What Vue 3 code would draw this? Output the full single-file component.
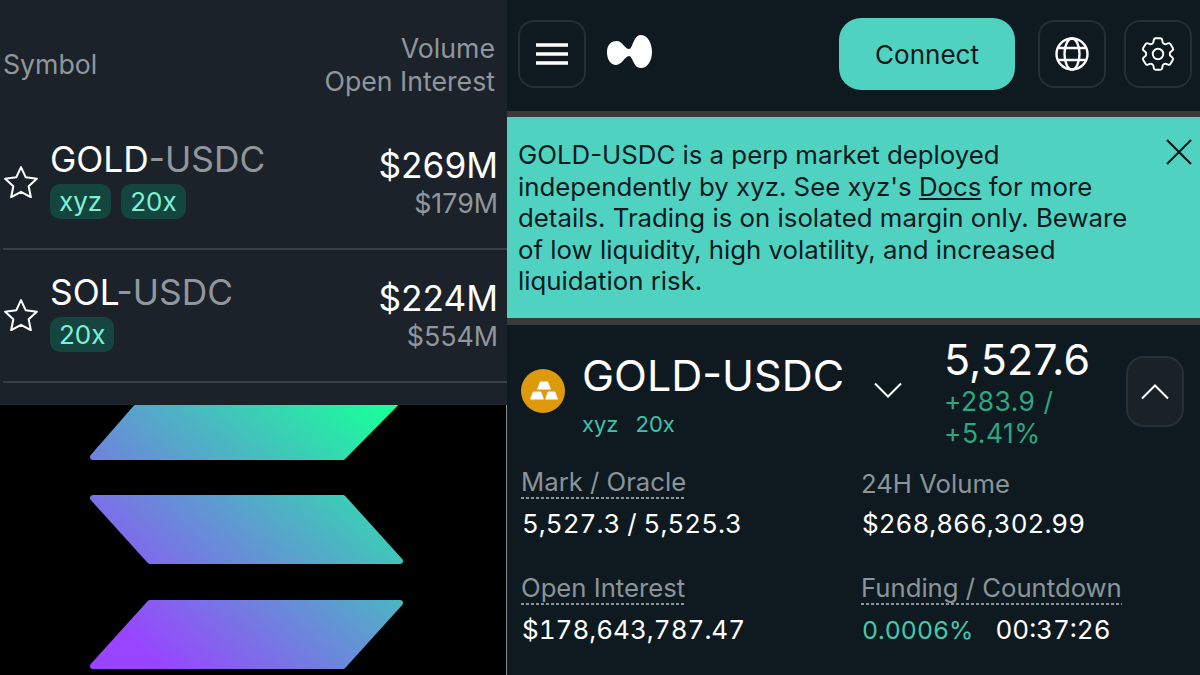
<script setup>
const rows = [
  { base: 'GOLD', tags: ['xyz', '20x'], vol: '$269M', oi: '$179M' },
  { base: 'SOL', tags: ['20x'], vol: '$224M', oi: '$554M' }
]
const stats = [
  { label: 'Mark / Oracle', dashed: true, value: '5,527.3 / 5,525.3' },
  { label: '24H Volume', dashed: false, value: '$268,866,302.99' },
  { label: 'Open Interest', dashed: true, value: '$178,643,787.47' },
  { label: 'Funding / Countdown', dashed: true, funding: '0.0006%', value: '00:37:26' }
]
</script>

<template>
  <div class="page">
    <section class="left">
      <div class="markets">
        <div class="thead">
          <span>Symbol</span>
          <span class="thead-right">Volume<br />Open Interest</span>
        </div>
        <div v-for="r in rows" :key="r.base" class="row">
          <svg class="star" viewBox="2 1.500 30 28.300" width="34" height="32">
            <path d="M17 2.500l4.200 9 9.800 1.200-7.200 6.700 1.900 9.700-8.700-4.800-8.700 4.800 1.900-9.700-7.200-6.700 9.800-1.200z" fill="none" stroke="#fff" stroke-width="1.800" stroke-linejoin="round" />
          </svg>
          <div class="sym">
            <div class="name">{{ r.base }}<span class="muted">-USDC</span></div>
            <div class="tags"><span v-for="t in r.tags" :key="t" class="tag">{{ t }}</span></div>
          </div>
          <div class="nums">
            <div class="vol">{{ r.vol }}</div>
            <div class="oi">{{ r.oi }}</div>
          </div>
        </div>
      </div>
      <div class="solana">
        <svg viewBox="0 0 506 270" width="506" height="270">
          <defs>
            <linearGradient id="sol" gradientUnits="userSpaceOnUse" x1="390" y1="5" x2="165" y2="265">
              <stop offset="0" stop-color="#19FF9B" />
              <stop offset="1" stop-color="#9945FF" />
            </linearGradient>
          </defs>
          <g fill="url(#sol)" stroke="url(#sol)" stroke-width="6" stroke-linejoin="round">
            <path d="M148 -11H405L343 52H93Z" />
            <path d="M93 93H343L400 156H150Z" />
            <path d="M150 198H400L343 261H93Z" />
          </g>
        </svg>
      </div>
    </section>

    <section class="right">
      <header class="topbar">
        <button class="icon-btn">
          <svg viewBox="0 0 34 24" width="34" height="24"><path d="M1 3h32M1 12h32M1 21h32" stroke="#fff" stroke-width="3.400" /></svg>
        </button>
        <svg class="logo" viewBox="0 0 45 33" width="45" height="33">
          <path d="M0 17C0 9 5 6 10 6C15 6 18 14 22 14C26 14 26 0 34 0C41 0 45 9 45 17C45 25 41 33 34 33C26 33 26 21 22 21C18 21 15 30 9 30C4 30 0 25 0 17Z" fill="#fff" />
        </svg>
        <button class="connect">Connect</button>
        <button class="icon-btn">
          <svg viewBox="0 0 34 34" width="34" height="34" fill="none" stroke="#fff" stroke-width="2.400">
            <circle cx="17" cy="17" r="15.500" />
            <ellipse cx="17" cy="17" rx="7.500" ry="15.500" />
            <path d="M3.500 11h27M3.500 23h27" />
          </svg>
        </button>
        <button class="icon-btn">
          <svg viewBox="0 0 24 24" width="42" height="42" fill="none" stroke="#fff" stroke-width="1.100" stroke-linejoin="round">
            <path d="M9.594 3.940c.09-.542.56-.94 1.110-.94h2.593c.55 0 1.020.398 1.110.94l.213 1.281c.063.374.313.686.645.87.074.04.147.083.22.127.325.196.72.257 1.075.124l1.217-.456a1.125 1.125 0 0 1 1.370.49l1.296 2.247a1.125 1.125 0 0 1-.26 1.431l-1.003.827c-.293.241-.438.613-.43.992a7.723 7.723 0 0 1 0 .255c-.008.378.137.75.43.991l1.004.827c.424.35.534.955.26 1.430l-1.298 2.247a1.125 1.125 0 0 1-1.369.491l-1.217-.456c-.355-.133-.75-.072-1.076.124a6.470 6.470 0 0 1-.22.128c-.331.183-.581.495-.644.869l-.213 1.281c-.09.543-.56.94-1.110.94h-2.594c-.55 0-1.019-.398-1.110-.94l-.213-1.281c-.062-.374-.312-.686-.644-.87a6.520 6.520 0 0 1-.22-.127c-.325-.196-.72-.257-1.076-.124l-1.217.456a1.125 1.125 0 0 1-1.369-.49l-1.297-2.247a1.125 1.125 0 0 1 .26-1.431l1.004-.827c.292-.24.437-.613.43-.991a6.932 6.932 0 0 1 0-.255c.007-.38-.138-.751-.43-.992l-1.004-.827a1.125 1.125 0 0 1-.26-1.430l1.297-2.247a1.125 1.125 0 0 1 1.370-.491l1.216.456c.356.133.751.072 1.076-.124.072-.044.146-.086.22-.128.332-.183.582-.495.644-.869l.214-1.280Z" />
            <circle cx="12" cy="12" r="3" />
          </svg>
        </button>
      </header>

      <div class="banner">
        <p>GOLD-USDC is a perp market deployed independently by xyz. See xyz's <u>Docs</u> for more details. Trading is on isolated margin only. Beware of low liquidity, high volatility, and increased liquidation risk.</p>
        <svg class="close" viewBox="0 0 26 26" width="26" height="26"><path d="M1 1l24 24M25 1L1 25" stroke="#0b1a1e" stroke-width="2.200" /></svg>
      </div>

      <div class="market">
        <div class="coin">
          <svg viewBox="0 0 44 44" width="44" height="44">
            <circle cx="22" cy="22" r="22" fill="#dc9a0c" />
            <g fill="#fff">
              <path d="M16 20.500l2.500-6.800q.4-1.200 1.600-1.200h5.800q1.200 0 1.600 1.200l2.500 6.800z" />
              <path d="M9 30.500l2.500-6.800q.4-1.200 1.600-1.200h5.800q1.200 0 1.600 1.200l2.500 6.800z" />
              <path d="M24 30.500l2.400-6.800q.4-1.200 1.600-1.200h5q1.200 0 1.600 1.200l2.400 6.800z" />
            </g>
          </svg>
        </div>
        <div class="title">
          <div class="title-name">GOLD-USDC</div>
          <div class="title-tags"><span>xyz</span><span>20x</span></div>
        </div>
        <svg class="chev" viewBox="0 0 28 16" width="28" height="16"><path d="M1 1.500l13 13 13-13" fill="none" stroke="#fff" stroke-width="2" /></svg>
        <div class="price">
          <div class="price-main">5,527.6</div>
          <div class="price-change">+283.9 /<br />+5.41%</div>
        </div>
        <button class="up">
          <svg viewBox="0 0 28 16" width="28" height="16"><path d="M1 14.500l13-13 13 13" fill="none" stroke="#fff" stroke-width="2" /></svg>
        </button>
      </div>

      <div class="stats">
        <div v-for="s in stats" :key="s.label" class="stat">
          <div class="label-wrap"><span class="label" :class="{ dashed: s.dashed }">{{ s.label }}</span></div>
          <div class="value"><span v-if="s.funding" class="funding">{{ s.funding }}</span>{{ s.value }}</div>
        </div>
      </div>
    </section>
  </div>
</template>

<style>
html, body { margin: 0; background: #000; }
</style>

<style scoped>
.page {
  width: 1200px;
  height: 675px;
  display: grid;
  grid-template-columns: 507px 693px;
  overflow: hidden;
  font-family: Inter, "Liberation Sans", sans-serif;
  color: #fff;
}
.left { display: flex; flex-direction: column; }
.markets { height: 405px; background: #1b2229; box-sizing: border-box; padding-left: 3px; }
.thead {
  height: 117px;
  box-sizing: border-box;
  padding: 16px 12px 4px 0;
  display: flex;
  justify-content: space-between;
  align-items: center;
  font-size: 26.700px;
  line-height: 33px;
  color: #8f979c;
}
.thead-right { text-align: right; }
.row {
  height: 133px;
  box-sizing: border-box;
  border-bottom: 2px solid #3b3f45;
  display: flex;
  align-items: flex-start;
  padding: 21px 9px 0 1px;
}
.star { margin-top: 28px; margin-right: 12px; flex: none; }
.sym { flex: 1; }
.name { font-size: 35.300px; line-height: 44px; color: #fff; }
.muted { color: #8f979c; }
.tags { display: flex; gap: 10px; margin-top: 2px; }
.tag {
  height: 35px;
  line-height: 35px;
  padding: 0 9px;
  border-radius: 10px;
  background: #14453f;
  color: #7ff0d4;
  font-size: 26px;
}
.nums { text-align: right; }
.vol { font-size: 35.200px; line-height: 44px; margin-top: 5px; }
.oi { font-size: 26.800px; line-height: 32px; color: #8f979c; }
.solana { height: 270px; background: #000; border-right: 1px solid #8a8a8a; }
.solana svg { display: block; }

.right { background: #0f1a20; display: flex; flex-direction: column; }
.topbar {
  height: 111px;
  box-sizing: border-box;
  padding: 20px 8px 0 11px;
  display: flex;
  align-items: flex-start;
}
.icon-btn {
  width: 68px;
  height: 68px;
  box-sizing: border-box;
  border: 2px solid #262e34;
  border-radius: 16px;
  background: transparent;
  padding: 0;
  display: flex;
  align-items: center;
  justify-content: center;
  flex: none;
}
.icon-btn + .icon-btn { margin-left: 18px; }
.logo { margin: 15px auto 0 21px; }
.connect {
  width: 176px;
  height: 72px;
  margin: -2px 23px 0 0;
  border: 0;
  border-radius: 22px;
  background: #50d2c1;
  color: #0b171c;
  font: 400 26px Inter, "Liberation Sans", sans-serif;
}
.banner {
  height: 214px;
  box-sizing: border-box;
  border-top: 6px solid #3a3a3a;
  border-bottom: 7px solid #3a3a3a;
  background: #50d2c1;
  background-clip: padding-box;
  color: #0b1a1e;
  padding: 22px 8px 0 11px;
  display: flex;
  justify-content: space-between;
  align-items: flex-start;
}
.banner p {
  margin: 0;
  width: 625px;
  font-size: 25.800px;
  line-height: 31.600px;
}
.close { flex: none; }
.market {
  height: 128px;
  position: relative;
  display: flex;
  align-items: flex-start;
  padding-left: 14px;
  box-sizing: border-box;
}
.coin { margin-top: 44px; flex: none; height: 44px; }
.coin svg { display: block; }
.title { margin-left: 18px; width: 290px; flex: none; padding-top: 22px; }
.title-name { font-size: 43px; line-height: 56px; margin-left: -1px; }
.title-tags { display: flex; gap: 17px; font-size: 22px; line-height: 28px; color: #3fc2ab; margin-top: 7px; margin-left: -1px; }
.chev { margin: 57px 0 0 1px; flex: none; }
.price { margin-left: 42px; width: 180px; flex: none; padding-top: 9px; }
.price-main { font-size: 43px; line-height: 50px; }
.price-change { font-size: 26.400px; line-height: 32px; color: #2ea67f; letter-spacing: .5px; margin-top: 1px; }
.up {
  position: absolute;
  left: 619px;
  top: 31px;
  width: 58px;
  height: 71px;
  box-sizing: border-box;
  border: 2px solid #283037;
  border-radius: 18px;
  background: #1a2228;
  padding: 0;
  display: flex;
  align-items: center;
  justify-content: center;
}
.stats {
  display: grid;
  grid-template-columns: 340px 1fr;
  padding: 13px 0 0 15px;
  row-gap: 21px;
}
.stat { height: 85px; }
.label-wrap { height: 36px; }
.label {
  display: inline-block;
  font-size: 25.700px;
  line-height: 31px;
  color: #8a9499;
  margin-left: -1px;
}
.label:not(.dashed) { margin-top: 2px; }
.label.dashed {
  padding-bottom: 2px;
  background: repeating-linear-gradient(90deg, #8a9499 0 3px, transparent 3px 5px) bottom / 100% 2px no-repeat;
}
.value { font-size: 26px; line-height: 32px; margin-top: 6px; font-variant-numeric: tabular-nums; }
.funding { color: #45c9b0; margin-right: 22px; font-size: 24.800px; }
</style>
